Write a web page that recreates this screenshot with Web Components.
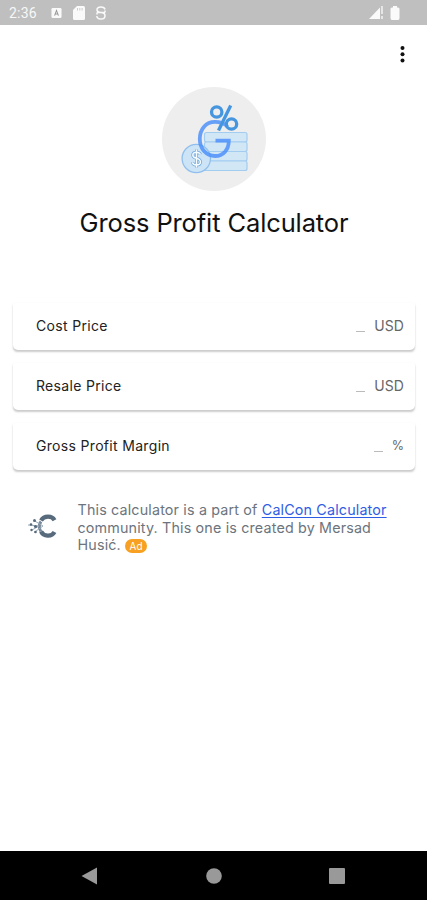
<!DOCTYPE html>
<html lang="en"><head><meta charset="utf-8"><title>Gross Profit Calculator</title>
<style>html,body{margin:0;height:100%;background:#fff}body{font-family:Inter,"Liberation Sans",sans-serif;overflow:hidden}</style></head>
<body><calc-app></calc-app>
<script>
const define=(name,html)=>{
  const t=document.createElement('template');t.innerHTML=html;
  customElements.define(name,class extends HTMLElement{
    constructor(){super();this.attachShadow({mode:'open'}).append(t.content.cloneNode(true));}
  });
};
define('status-bar',`<style>
:host{display:flex;height:25px;background:#bfbfbf;color:#fff;align-items:center;box-sizing:border-box;padding:1px 27px 0 9px;font:14px/20px Roboto,sans-serif;flex:none}
span{width:42px;letter-spacing:.2px;color:#f7f7f7}svg{display:block}.a{margin-right:11px}.b{margin-right:10px}.sig{margin-left:auto;margin-right:6px}
</style><span>2:36</span>
<svg class="a" width="11" height="12" viewBox="0 0 12 12"><rect x=".5" y=".5" width="11" height="11" rx="1.5" fill="#fafafa"/><path d="M3.900 8.800 6 3.200l2.100 5.600M4.600 7.200h2.800" fill="none" stroke="#999" stroke-width="1.100"/></svg>
<svg class="b" width="12" height="14" viewBox="0 0 12 14"><path d="M4 0h6.500Q12 0 12 1.500v11Q12 14 10.500 14h-9Q0 14 0 12.500V4z" fill="#fafafa"/><path d="M4.500 2v2.500M6.800 2v2.500M9.100 2v2.500" stroke="#ccc"/></svg>
<svg width="12" height="14" viewBox="0 0 12 14" fill="none" stroke="#fafafa" stroke-width="1.500"><path d="M10 3.500Q9.500 1 6 1 2 1 2 3.800 2 6.200 6 6.500q4 .3 4 3.200Q10 13 6 13 2 13 1.800 10M2 6.500h8M2 8.500v-2M10 4.500v2"/></svg>
<svg class="sig" width="15" height="14" viewBox="0 0 15 14"><path d="M0 13 11 1.500V13z" fill="#fafafa"/><path d="M13 0v8M13 10v3" stroke="#f4f4f4" stroke-width="1.500"/></svg>
<svg width="10" height="14" viewBox="0 0 10 14"><path d="M3 0h4v1.500h1Q9.500 1.500 9.500 3v9Q9.500 14 8 14H2Q.5 14 .5 12V3Q.5 1.500 2 1.500h1z" fill="#fafafa"/></svg>`);
define('app-menu',`<style>:host{display:flex;justify-content:flex-end;height:62px;padding:20px 21px 0;box-sizing:border-box}</style>
<svg width="7" height="19" viewBox="0 0 7 19"><g fill="#111"><circle cx="3.500" cy="3" r="2"/><circle cx="3.500" cy="9.300" r="2"/><circle cx="3.500" cy="15.600" r="2"/></g></svg>`);
define('app-hero',`<style>:host{display:flex;flex-direction:column;align-items:center;height:216px}svg{display:block;margin-left:1px}
h1{font-size:25.500px;line-height:32px;font-weight:400;color:#111;margin:16px 0 0 1px;letter-spacing:-.12px;white-space:nowrap}</style>
<svg width="104" height="104" viewBox="0 0 104 104" fill="none"><circle cx="52" cy="52" r="52" fill="#eee"/>
<g fill="#d2e7f5" stroke="#a2ccf0" stroke-width="1.200"><rect x="42.500" y="45.500" width="42.500" height="9.500" rx="2"/><rect x="42.500" y="55" width="42.500" height="9.500" rx="2"/><rect x="42.500" y="64.500" width="42.500" height="9.500" rx="2"/><rect x="42.500" y="74" width="42.500" height="9.500" rx="2"/></g>
<circle cx="34.300" cy="71.500" r="14.200" fill="#cce4f5" stroke="#91bfed" stroke-width="1.300"/>
<path d="M38.400 67.500Q37.500 65.200 34.500 65.200 30.800 65.200 30.800 68 30.800 70.500 34.500 71.300 38.400 72.200 38.400 75 38.400 78 34.500 78 31 78 30.500 75.300M34.500 62.500v18" stroke="#72a8dc" stroke-width="3"/>
<path d="M38.400 67.500Q37.500 65.200 34.500 65.200 30.800 65.200 30.800 68 30.800 70.500 34.500 71.300 38.400 72.200 38.400 75 38.400 78 34.500 78 31 78 30.500 75.300M34.500 62.500v18" stroke="#f5fbff" stroke-width="1.500"/>
<path d="M65.500 39.500C62 36 58 34.800 53 34.800 44 34.800 37.800 42 37.800 52 37.800 62 44.500 69 53 69 61.500 69 66.800 62.500 66.800 53.700H53.500" stroke="#468cfa" stroke-opacity=".8" stroke-width="3.800"/>
<g stroke="#4596df" stroke-width="3.300"><circle cx="54.700" cy="25" r="5.200"/><circle cx="69.500" cy="37" r="5.200"/><path d="M68.700 18.500 56.500 43.500"/></g></svg>
<h1><slot></slot></h1>`);
define('value-card',`<style>:host{display:flex;align-items:center;box-sizing:border-box;height:47px;padding:0 11px 2px 23px;border-radius:2px 2px 5px 5px;background:#fff;box-shadow:0 2px 2px -.5px #ccc,0 0 2px #f6f6f6;font-size:14px;line-height:20px;color:#222;letter-spacing:.32px}
.v{margin-left:auto;width:9px;height:1px;background:#bbb;color:transparent;font-size:1px;line-height:1px;margin-right:9px;margin-top:12px;overflow:hidden}.u{color:#666;letter-spacing:.1px}::slotted([slot=unit]){white-space:nowrap}</style><slot></slot><span class="v">_</span><span class="u"><slot name="unit"></slot></span>`);
define('ad-badge',`<style>:host{display:inline-block;width:22px;height:14px;border-radius:7px;background:#f7a021;color:#fff;font-size:10px;line-height:14px;text-align:center;letter-spacing:0;vertical-align:0}</style><slot></slot>`);
define('community-note',`<style>:host{display:flex;padding:31px 24px 0 26px}svg{flex:none;margin:11px 19.5px 0 0}
p{margin:0;font-size:14.300px;line-height:17.700px;color:#6c747d;letter-spacing:.17px;white-space:nowrap}a{color:#2e5de5;text-decoration:underline;text-underline-offset:2px;text-decoration-thickness:1px}</style>
<svg width="32" height="28" viewBox="0 0 32 28"><path d="M28.500 8.200C26 3.500 18 3.500 15 8.500M28.500 20C25.500 25.500 17.500 24.500 15 19.500" fill="none" stroke="#586b7c" stroke-width="4.200"/><path d="M15 9.500Q11.500 14 15 19.500" fill="none" stroke="#78899a" stroke-width="3"/><path d="M8 8.500 17 14 8 20.500M2 13l11 1-7 4" fill="none" stroke="#9baab7" stroke-width="1"/><g fill="#586b7c"><circle cx="8.500" cy="8.500" r="1.500"/><circle cx="5" cy="12.500" r="1.300"/><circle cx="9.500" cy="14.500" r="1.600"/><circle cx="5.500" cy="18" r="1.200"/><circle cx="9.500" cy="20" r="1.300"/></g></svg>
<p>This calculator is a part of <a>CalCon Calculator</a><br>community. This one is created by Mersad<br>Husić. <ad-badge>Ad</ad-badge></p>`);
define('nav-bar',`<style>:host{display:flex;justify-content:space-between;align-items:center;height:49px;background:#000;margin-top:auto;padding:0 82px 0 81px;box-sizing:border-box;flex:none}</style>
<svg width="17" height="18" viewBox="0 0 17 18"><path d="M.5 9 16 .5v17z" fill="#999"/></svg><svg width="16" height="16"><circle cx="8" cy="8" r="7.800" fill="#999"/></svg><svg width="16" height="16"><rect width="16" height="16" rx="1" fill="#999"/></svg>`);
define('calc-app',`<style>:host{display:flex;flex-direction:column;width:427px;height:900px;background:#fff}.cards{display:flex;flex-direction:column;gap:13px;margin:0 12px 0 13px}.pct{font-size:12.500px}</style>
<status-bar></status-bar><app-menu></app-menu><app-hero>Gross Profit Calculator</app-hero>
<div class="cards"><value-card>Cost Price<span slot="unit">USD</span></value-card><value-card>Resale Price<span slot="unit">USD</span></value-card><value-card>Gross Profit Margin<span slot="unit" class="pct">%</span></value-card></div>
<community-note></community-note><nav-bar></nav-bar>`);
</script></body></html>
